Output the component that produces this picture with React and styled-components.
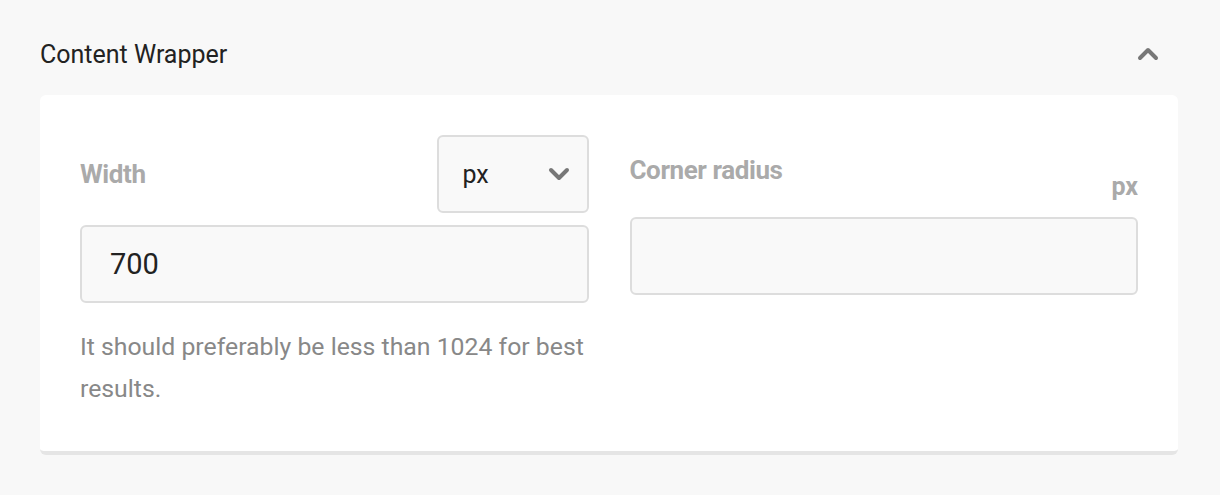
import styled, { createGlobalStyle } from 'styled-components';

const GlobalStyle = createGlobalStyle`
  body {
    margin: 0;
    background: #f8f8f8;
    font-family: Roboto, "Liberation Sans", sans-serif;
  }
`;

const StyledPage = styled.div`
  padding: 28px 42px 0 40px;
`;
const StyledHeader = styled.div`
  display: flex;
  align-items: center;
  justify-content: space-between;
  height: 52px;
  margin-bottom: 15px;
`;
const StyledTitle = styled.h2`
  margin: 0;
  font-size: 25px;
  font-weight: 400;
  color: #222;
`;
const StyledToggle = styled.button`
  border: 0;
  background: none;
  padding: 0;
  margin-right: 19px;
  display: flex;
  color: #777;
`;
const StyledCard = styled.div`
  background: #fff;
  border-radius: 6px;
  border-bottom: 4px solid #e5e5e5;
  padding: 40px 40px 41px;
  display: grid;
  grid-template-columns: 1fr 1fr;
  gap: 41px;
`;
const StyledField = styled.div`
  display: flex;
  flex-direction: column;
`;
const StyledLabelRow = styled.div`
  display: flex;
  justify-content: space-between;
  align-items: ${(props) => props.align || 'center'};
  height: ${(props) => props.height}px;
  margin-bottom: 12px;
`;
const StyledLabel = styled.label`
  font-size: 26px;
  font-weight: 700;
  color: #aaa;
  letter-spacing: -0.4px;
  align-self: center;
`;
const StyledUnit = styled.span`
  font-size: 25px;
  font-weight: 700;
  color: #aaa;
  margin-bottom: 4px;
`;
const StyledSelect = styled.div`
  box-sizing: border-box;
  width: 152px;
  height: 78px;
  border: 2px solid #ddd;
  border-radius: 6px;
  background: #f9f9f9;
  display: flex;
  align-items: center;
  justify-content: space-between;
  padding: 0 17px 0 24px;
  font-size: 25px;
  color: #222;
`;
const StyledInput = styled.div`
  box-sizing: border-box;
  height: 78px;
  border: 2px solid #ddd;
  border-radius: 6px;
  background: #f9f9f9;
  display: flex;
  align-items: center;
  padding: 0 28px;
  font-size: 29px;
  font-weight: 400;
  color: #222;
`;
const StyledHelp = styled.p`
  margin: 23px 0 0;
  font-size: 24.8px;
  line-height: 42px;
  color: #888;
`;
const StyledCaret = styled.span`
  display: flex;
  color: #777;
`;

const Chevron = ({ up }) => (
  <svg width="22" height="14" viewBox="0 0 22 14" fill="none">
    <path
      d={up ? 'M3 11 L11 3 L19 11' : 'M3 3 L11 11 L19 3'}
      stroke="currentColor"
      strokeWidth="4"
      strokeLinecap="round"
      strokeLinejoin="round"
    />
  </svg>
);

export default function App() {
  return (
    <>
      <GlobalStyle />
      <StyledPage>
        <StyledHeader>
          <StyledTitle>Content Wrapper</StyledTitle>
          <StyledToggle>
            <Chevron up />
          </StyledToggle>
        </StyledHeader>
        <StyledCard>
          <StyledField>
            <StyledLabelRow height={78}>
              <StyledLabel>Width</StyledLabel>
              <StyledSelect>
                px
                <StyledCaret>
                  <Chevron />
                </StyledCaret>
              </StyledSelect>
            </StyledLabelRow>
            <StyledInput>700</StyledInput>
            <StyledHelp>
              It should preferably be less than 1024 for best results.
            </StyledHelp>
          </StyledField>
          <StyledField>
            <StyledLabelRow height={70} align="flex-end">
              <StyledLabel>Corner radius</StyledLabel>
              <StyledUnit>px</StyledUnit>
            </StyledLabelRow>
            <StyledInput />
          </StyledField>
        </StyledCard>
      </StyledPage>
    </>
  );
}
